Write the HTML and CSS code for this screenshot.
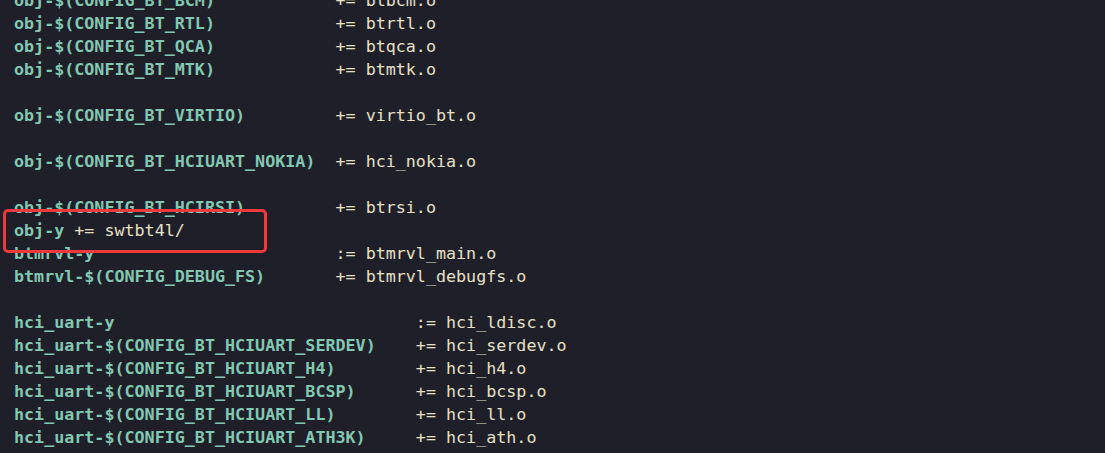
FILE: index.html
```html
<!DOCTYPE html>
<html>
<head>
<meta charset="utf-8">
<link rel="stylesheet" href="styles.css">
</head>
<body>
<div class="editor">
<pre class="code"><span class="k">obj-$(CONFIG_BT_BCM)</span><span class="v">            += btbcm.o</span>
<span class="k">obj-$(CONFIG_BT_RTL)</span><span class="v">            += btrtl.o</span>
<span class="k">obj-$(CONFIG_BT_QCA)</span><span class="v">            += btqca.o</span>
<span class="k">obj-$(CONFIG_BT_MTK)</span><span class="v">            += btmtk.o</span>

<span class="k">obj-$(CONFIG_BT_VIRTIO)</span><span class="v">         += virtio_bt.o</span>

<span class="k">obj-$(CONFIG_BT_HCIUART_NOKIA)</span><span class="v">  += hci_nokia.o</span>

<span class="k">obj-$(CONFIG_BT_HCIRSI)</span><span class="v">         += btrsi.o</span>
<span class="k">obj-y</span><span class="v"> += swtbt4l/</span>
<span class="k">btmrvl-y</span><span class="v">                        := btmrvl_main.o</span>
<span class="k">btmrvl-$(CONFIG_DEBUG_FS)</span><span class="v">       += btmrvl_debugfs.o</span>

<span class="k">hci_uart-y</span><span class="v">                              := hci_ldisc.o</span>
<span class="k">hci_uart-$(CONFIG_BT_HCIUART_SERDEV)</span><span class="v">    += hci_serdev.o</span>
<span class="k">hci_uart-$(CONFIG_BT_HCIUART_H4)</span><span class="v">        += hci_h4.o</span>
<span class="k">hci_uart-$(CONFIG_BT_HCIUART_BCSP)</span><span class="v">      += hci_bcsp.o</span>
<span class="k">hci_uart-$(CONFIG_BT_HCIUART_LL)</span><span class="v">        += hci_ll.o</span>
<span class="k">hci_uart-$(CONFIG_BT_HCIUART_ATH3K)</span><span class="v">     += hci_ath.o</span></pre>
<div class="highlight"></div>
</div>
</body>
</html>
```
FILE: styles.css
```css
html, body {
  margin: 0;
  padding: 0;
  background: #1f1f29;
  overflow: hidden;
}
.editor {
  position: relative;
  width: 1105px;
  height: 453px;
  overflow: hidden;
  background: #1f1f29;
}
.code {
  margin: -11px 0 0 14px;
  font-family: "DejaVu Sans Mono", monospace;
  font-size: 16.7px;
  line-height: 23px;
  white-space: pre;
}
.k {
  color: #82c8b3;
  font-weight: bold;
}
.v {
  color: #e6e0c6;
}
.highlight {
  position: absolute;
  left: 3px;
  top: 209px;
  width: 258px;
  height: 38px;
  border: 3px solid #ee3a3c;
  border-radius: 5px;
}
```
